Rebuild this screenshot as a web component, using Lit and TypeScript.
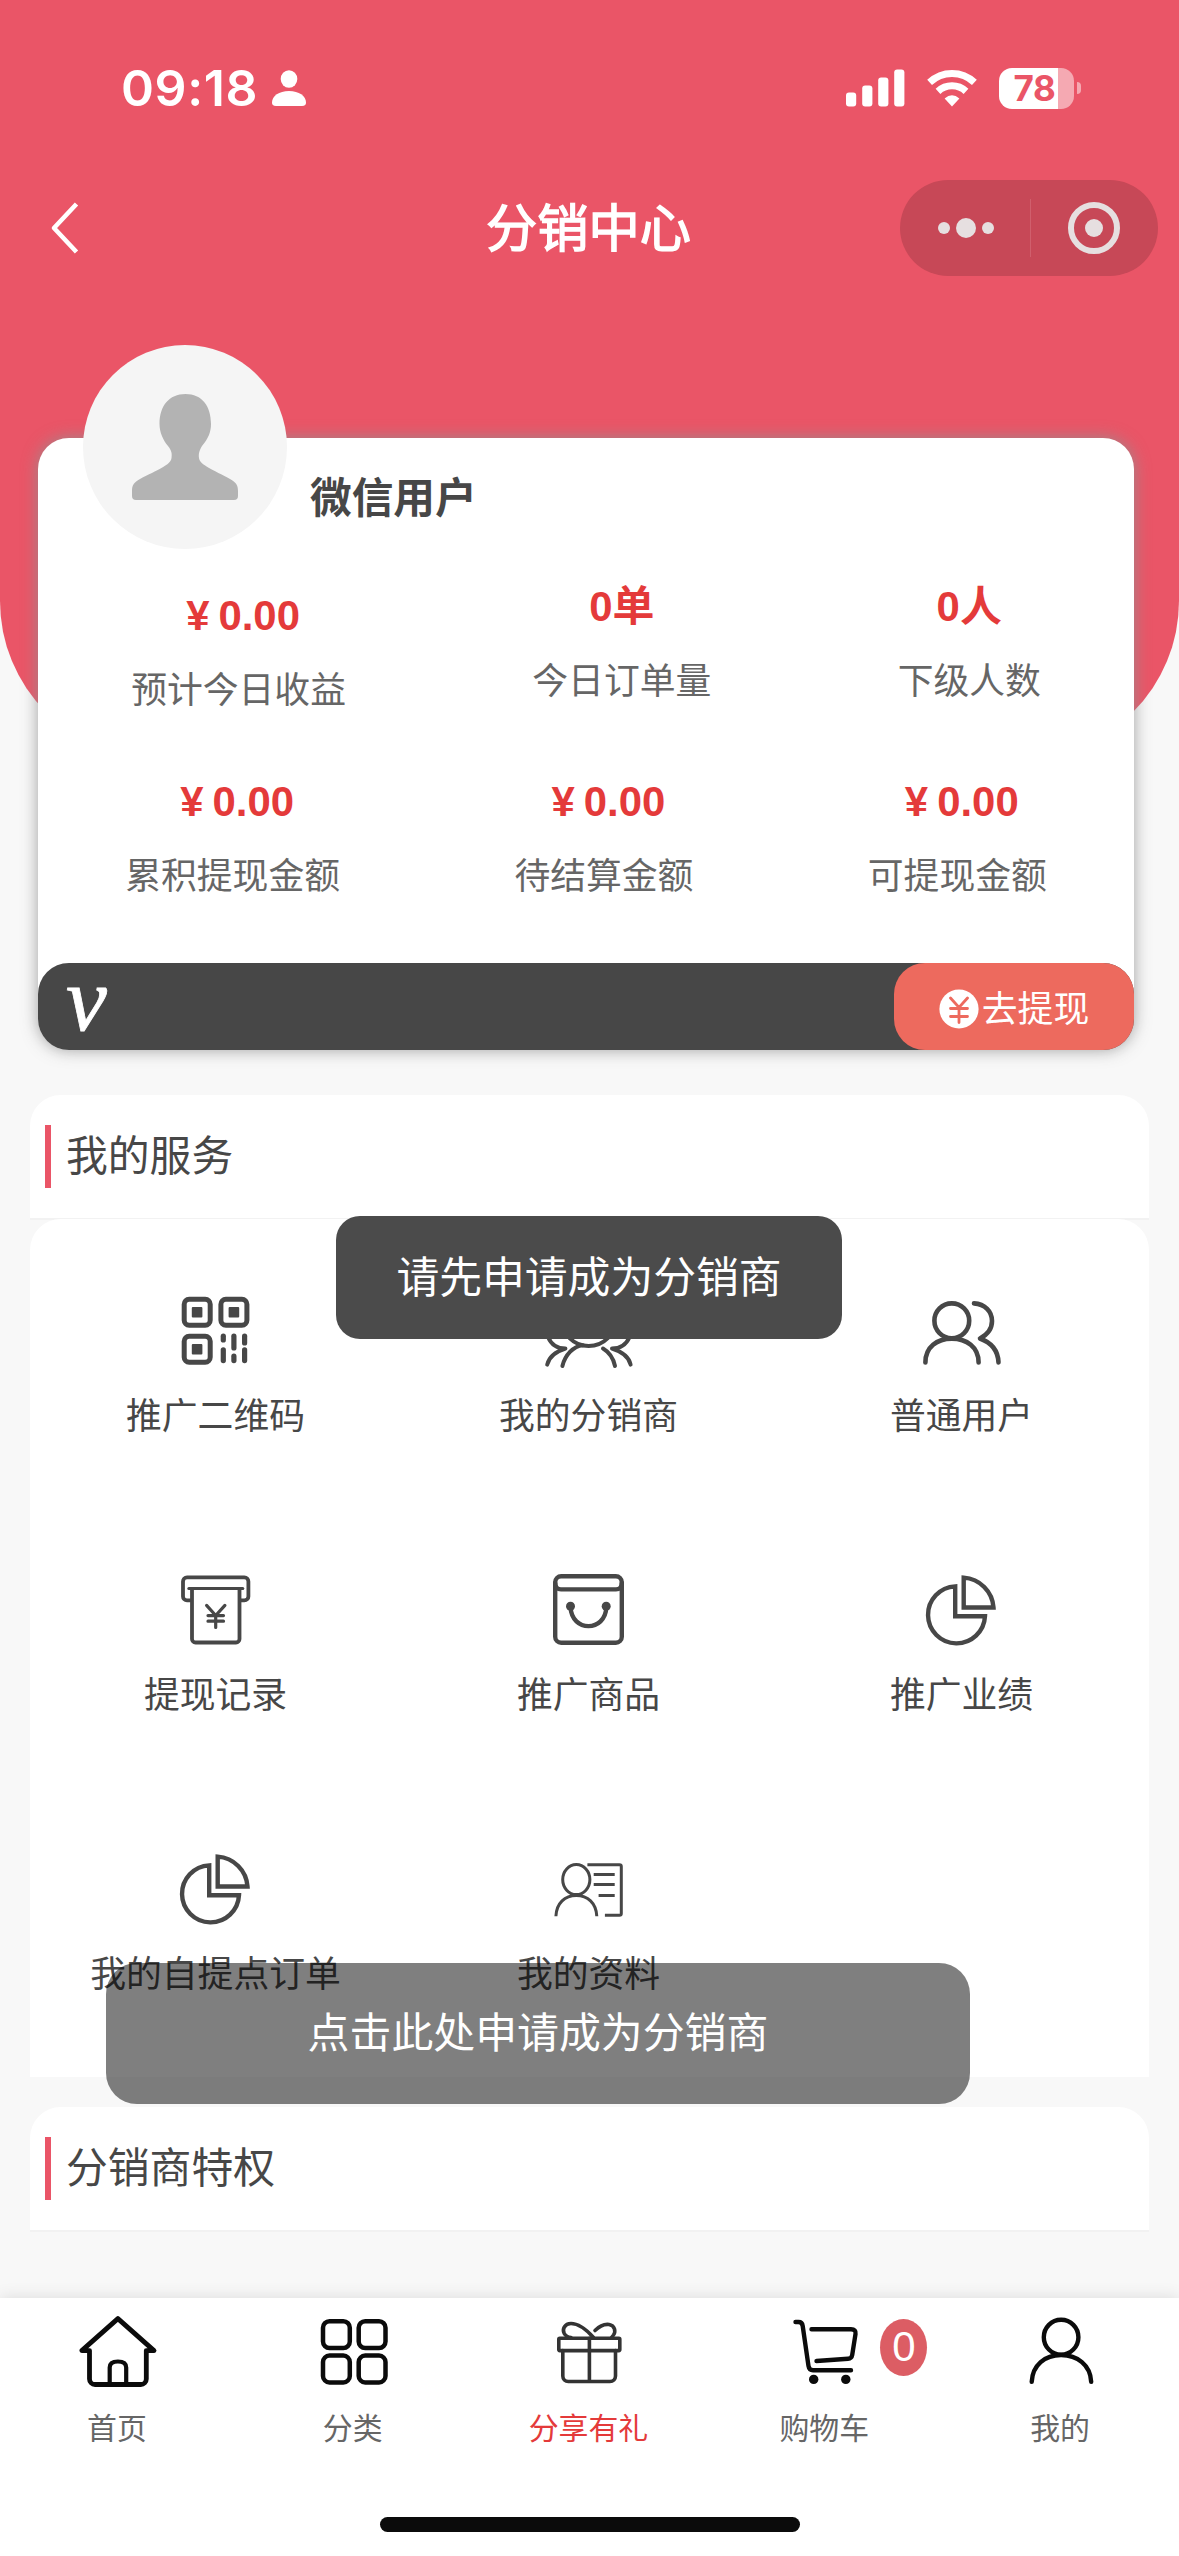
import { LitElement, html, css, svg } from "lit";
import { customElement } from "lit/decorators.js";

interface Stat { value: string; label: string; money?: boolean; }
interface Entry { icon: string; label: string; active?: boolean; }

const PIE = svg`
  <g stroke-width="4.4">
    <path stroke-linejoin="miter" d="M41.7 7.6A32 32 0 0 1 71.5 37.5H41.7Z"/>
    <path stroke-linejoin="miter" d="M33.2 16.4V46.2H63A28.5 28.5 0 1 1 33.2 16.4Z"/>
  </g>`;

const ICONS: Record<string, unknown> = {
  qr: svg`
    <g stroke-width="5">
      <rect x="8.2" y="8.2" width="26" height="26" rx="5"/>
      <rect x="44.9" y="8.2" width="26" height="26" rx="5"/>
      <rect x="8.2" y="45.2" width="26" height="26" rx="5"/>
    </g>
    <g fill="currentColor" stroke="none">
      <rect x="15.8" y="16" width="10.6" height="10.4" rx="1"/>
      <rect x="52.6" y="16" width="10.6" height="10.4" rx="1"/>
      <rect x="15.8" y="53" width="10.6" height="10.4" rx="1"/>
      <rect x="44.7" y="42.6" width="5.2" height="9" rx="2.6"/>
      <rect x="44.7" y="56.2" width="5.2" height="16" rx="2.6"/>
      <rect x="55.3" y="42.6" width="5.2" height="17" rx="2.6"/>
      <rect x="55.3" y="62.6" width="5.2" height="9.6" rx="2.6"/>
      <rect x="66" y="42.6" width="5.2" height="12" rx="2.6"/>
      <rect x="66" y="56.2" width="5.2" height="16" rx="2.6"/>
    </g>`,
  team: svg`
    <g stroke-width="4">
      <circle cx="39.7" cy="28" r="27"/>
      <path d="M13.4 75C16 64.5 24 55 34 54.2M54 57.5C60 61 64.5 68 66 75"/>
      <path d="M-1 46C2 53 8 57.6 16.4 57.6C7 60.5 0 66 -1.8 73.6"/>
      <path d="M80.6 46C77.500 53 71.500 57.6 63 57.6C72.500 60.5 80 66 81.600 73.6"/>
    </g>`,
  users: svg`
    <g stroke-width="4.6">
      <circle cx="29.8" cy="29.8" r="17.4"/>
      <path d="M3.4 71.4C3.4 56 15 47.6 29.8 47.6S56.6 56 56.6 71.4"/>
      <path d="M52 12.4C63 13 70 20.5 70 30C70 38 65.5 43.5 58 47.5C69 51.5 76 59 76.5 71.4"/>
    </g>`,
  atm: svg`
    <g stroke-width="3.8">
      <path d="M15 30.4H11A4 4 0 0 1 7 26.4V11.4A4 4 0 0 1 11 7.4H68.4A4 4 0 0 1 72.4 11.4V26.4A4 4 0 0 1 68.4 30.4H64.4"/>
      <path d="M16 19V69A3.5 3.5 0 0 0 19.500 72.500H60A3.500 3.500 0 0 0 63.500 69V19"/>
      <path d="M12.8 18.4H66.800" stroke-width="3"/>
    </g>
    <path stroke-width="3.2" d="M30.600 35.400L39.700 45.500L48.900 35.400M39.700 45.500V57.500M32 45.600H47.500M32 51.200H47.500"/>`,
  bag: svg`
    <g stroke-width="4.4">
      <rect x="6.2" y="6.2" width="66.600" height="66.600" rx="6"/>
      <path d="M6.200 13C6.200 17 8.500 19.400 12 19.400H67C70.500 19.400 72.800 17 72.800 13"/>
      <path d="M21.600 37C22.500 62.500 56.500 62.500 57.300 37"/>
    </g>
    <g fill="currentColor" stroke="none">
      <circle cx="21.500" cy="36.200" r="4.500"/><circle cx="57.200" cy="36.200" r="4.500"/>
    </g>`,
  pie: PIE,
  profile: svg`
    <g stroke-width="3" stroke-linecap="butt">
      <ellipse cx="27.300" cy="30.600" rx="13.600" ry="15"/>
      <path d="M6.900 67.200C7.500 54 16 46.400 27.300 46.400S47.200 54 47.800 67.200"/>
      <path d="M38.400 15.800H70.500Q72.300 15.800 72.300 17.600V64.500Q72.300 66.300 70.500 66.300H55.900"/>
      <path d="M44.700 25.400H65.700M44.700 35.600H65.700M49.600 46.400H65.700"/>
    </g>`,
  home: svg`
    <g stroke-width="4.800">
      <path d="M11.500 68V39.600H3.800L39.900 7.600L76 39.600H68.300V68A5.500 5.500 0 0 1 62.800 73.500H17A5.500 5.500 0 0 1 11.500 68Z"/>
      <path d="M31.700 73V56.500C31.700 52.500 34 50.500 39.900 50.500S48.200 52.500 48.200 56.500V73" stroke-width="4.200"/>
    </g>`,
  category: svg`
    <g stroke-width="4.500">
      <rect x="9" y="10.300" width="26.800" height="26.800" rx="6.500"/>
      <rect x="44.700" y="10.300" width="26.800" height="26.800" rx="6.500"/>
      <rect x="9" y="44.600" width="26.800" height="26.800" rx="6.500"/>
      <rect x="44.700" y="44.600" width="26.800" height="26.800" rx="6.500"/>
    </g>`,
  gift: svg`
    <g stroke-width="3.600" stroke="#333">
      <rect x="9.800" y="27.200" width="61" height="12.400" rx="1"/>
      <path d="M13.800 39.600V65A5.500 5.500 0 0 0 19.300 70.500H61A5.500 5.500 0 0 0 66.500 65V39.600M40.400 27.200V70.500"/>
      <path d="M44.500 26.500C36 17 27.500 12.500 22 12.500C15.500 12.500 13 18.500 15.200 22.500C16.500 25 18.500 26 22 26.500"/>
      <path d="M46 19.500C50.500 15 56 13 60 13.500C66 14.500 67 20.500 64.500 24L62.500 26.500"/>
    </g>`,
  cart: svg`
    <g stroke-width="4.400">
      <path d="M10.500 11H13.500Q17.200 11 17.700 15L23.500 55Q24.200 59.300 28 59.300H66"/>
      <path d="M26.500 18.200H66Q71.300 18.200 70.500 23L67.200 44Q66.600 47.600 63 47.800L31.500 50"/>
    </g>
    <g fill="currentColor" stroke="none">
      <circle cx="28.700" cy="68.400" r="4.700"/><circle cx="60.800" cy="68.400" r="4.700"/>
    </g>`,
  me: svg`
    <g stroke-width="4.400">
      <ellipse cx="40.100" cy="26.200" rx="17.300" ry="17.400"/>
      <path d="M10.700 70.800C11.500 54 24 44 40.100 44S69.500 54 70.200 70.800"/>
    </g>`,
};

@customElement("line-icon")
class LineIcon extends LitElement {
  static properties = { name: { type: String } };
  declare name: string;
  static styles = css`
    :host { display: block; width: 80px; height: 80px; }
    svg { display: block; overflow: visible; fill: none; stroke: currentColor; stroke-linecap: round; stroke-linejoin: round; }
  `;
  render() {
    return html`<svg width="80" height="80" viewBox="0 0 80 80">${ICONS[this.name]}</svg>`;
  }
}

@customElement("section-title")
class SectionTitle extends LitElement {
  static styles = css`
    :host {
      display: flex; align-items: center; box-sizing: border-box; height: 125px;
      padding: 0 0 0 15px; gap: 15px; background: #fff;
      border-bottom: 2px solid #f2f2f2; border-radius: 31px 31px 0 0;
      font-size: 41.800px; line-height: 60px; color: #474747;
    }
    .mark { width: 6px; height: 63px; background: #ea5567; }
  `;
  render() {
    return html`<div class="mark"></div><div class="text"><slot></slot></div>`;
  }
}

@customElement("app-root")
class AppRoot extends LitElement {
  private today: Stat[] = [
    { value: "0.00", label: "预计今日收益", money: true },
    { value: "0单", label: "今日订单量" },
    { value: "0人", label: "下级人数" },
  ];
  private totals: Stat[] = [
    { value: "0.00", label: "累积提现金额", money: true },
    { value: "0.00", label: "待结算金额", money: true },
    { value: "0.00", label: "可提现金额", money: true },
  ];
  private services: Entry[] = [
    { icon: "qr", label: "推广二维码" },
    { icon: "team", label: "我的分销商" },
    { icon: "users", label: "普通用户" },
    { icon: "atm", label: "提现记录" },
    { icon: "bag", label: "推广商品" },
    { icon: "pie", label: "推广业绩" },
    { icon: "pie", label: "我的自提点订单" },
    { icon: "profile", label: "我的资料" },
  ];
  private tabs: Entry[] = [
    { icon: "home", label: "首页" },
    { icon: "category", label: "分类" },
    { icon: "gift", label: "分享有礼", active: true },
    { icon: "cart", label: "购物车" },
    { icon: "me", label: "我的" },
  ];

  static styles = css`
    :host {
      display: flex; flex-direction: column; position: relative;
      width: 1179px; height: 2556px; overflow: hidden; background: #f8f8f8;
      font-family: "Liberation Sans", "Noto Sans CJK SC", sans-serif; color: #474747;
    }
    .header {
      flex: none; box-sizing: border-box; height: 758px; background: #ea5567; color: #fff;
      border-radius: 0 0 157px 157px;
    }
    .status { display: flex; align-items: center; height: 176px; padding: 0 98px 0 121px; }
    .time { font: 600 50px/60px Inter, sans-serif; letter-spacing: 0.600px; }
    .person { margin-left: 14px; }
    .radios { margin-left: auto; display: flex; align-items: center; }
    .wifi { margin-left: 22px; }
    .battery {
      display: flex; align-items: center; justify-content: center; box-sizing: border-box;
      width: 75px; height: 41px; margin-left: 22px; padding-right: 4px; border-radius: 13px;
      background: linear-gradient(90deg, #fff 59px, #f5a9b2 59px);
      font: 700 35px/41px Inter, sans-serif; letter-spacing: -0.300px; color: #ea5567;
    }
    .nub { width: 4px; height: 12px; margin-left: 3px; border-radius: 0 6px 6px 0; background: #f5a9b2; }
    .nav {
      display: grid; grid-template-columns: 1fr auto 1fr; align-items: center;
      height: 104px; padding: 0 21px 0 49px;
    }
    .nav h1 {
      margin: 4px 0 0; font-size: 51.200px; line-height: 80px; font-weight: 400;
      -webkit-text-stroke: 1.500px #fff; transform: translateX(-15px);
    }
    .capsule {
      justify-self: end; display: flex; align-items: center; width: 258px; height: 96px;
      border-radius: 48px; background: #c74857;
    }
    .dots { display: flex; align-items: center; justify-content: center; gap: 6px; flex: 1; padding-left: 2px; }
    .dot { width: 12px; height: 12px; border-radius: 50%; background: #e6dfe0; }
    .dot.big { width: 20px; height: 20px; }
    .rule { width: 1px; height: 58px; background: #d05f6d; }
    .target { display: flex; flex: 1; justify-content: center; }
    .ring {
      display: flex; align-items: center; justify-content: center; box-sizing: border-box;
      width: 52px; height: 52px; border: 6px solid #e6dfe0; border-radius: 50%;
    }
    .core { width: 18px; height: 18px; border-radius: 50%; background: #e6dfe0; }

    .card {
      flex: none; position: relative; display: flex; flex-direction: column; box-sizing: border-box;
      width: 1096px; height: 612px; margin: -320px 0 0 38px; background: #fff;
      border-radius: 31px; box-shadow: 0 0 16px rgba(145, 145, 145, 0.850);
    }
    .user { display: flex; height: 111px; padding-left: 45px; gap: 23px; }
    .avatar {
      display: flex; align-items: center; justify-content: center; box-sizing: border-box; flex: none;
      width: 204px; height: 204px; margin-top: -93px; border-radius: 50%; background: #f5f5f5;
    }
    .name { font-size: 41.700px; line-height: 60px; font-weight: 700; margin-top: 31px; }
    .stats { display: flex; justify-content: space-around; height: 195px; }
    .stat { display: flex; flex-direction: column; align-items: center; padding-top: 26px; }
    .stats.today .stat:first-child { padding-top: 35px; }
    .value { font-size: 41.900px; line-height: 64px; font-weight: 700; color: #e43a3a; }
    .yen { margin: 0 9px; }
    .label { font-size: 35.800px; line-height: 50px; margin-top: 18px; color: #666; }
    .bar {
      display: flex; justify-content: space-between; height: 87px; margin-top: auto;
      background: #474747; border-radius: 31px; color: #fff;
    }
    .level { font: italic 400 92px/60px "Liberation Serif", serif; -webkit-text-stroke: 0.800px #fff; margin: 6px 0 0 28px; }
    .withdraw {
      display: flex; align-items: center; justify-content: center; gap: 3px; width: 240px;
      background: #ed6a5e; border-radius: 31px; font-size: 35.800px; line-height: 50px;
    }
    .withdraw svg { margin-top: 5px; }
    .withdraw span { margin-top: 6px; }

    .block { flex: none; display: flex; flex-direction: column; margin: 0 30px; }
    .services { margin-top: 45px; }
    .grid {
      display: grid; grid-template-columns: repeat(3, 1fr); grid-auto-rows: 279px;
      box-sizing: border-box; height: 858px; margin-top: -1px; padding-top: 21px; background: #fff;
      border-radius: 31px 31px 0 0;
    }
    .entry {
      display: flex; flex-direction: column; align-items: center; padding-top: 51px; gap: 21px;
      transform: translateX(-1px);
    }
    .entry span { font-size: 35.800px; line-height: 50px; white-space: nowrap; }
    .privileges { margin-top: 30px; }

    .toast {
      position: absolute; left: 336px; top: 1216px; display: flex; align-items: center; justify-content: center;
      width: 506px; height: 123px; border-radius: 24px; background: #4b4b4b; color: #fff;
      font-size: 42.800px; line-height: 60px;
    }
    .apply {
      position: absolute; left: 106px; top: 1963px; display: flex; align-items: center; justify-content: center;
      width: 864px; height: 141px; border-radius: 31px; background: rgba(0, 0, 0, 0.500); color: #fff;
      font-size: 41.900px; line-height: 60px;
    }

    .tabbar {
      display: flex; flex-direction: column; align-items: center; box-sizing: border-box;
      height: 258px; margin-top: auto; padding-top: 13px; background: #fff;
      box-shadow: 0 0 16px rgba(0, 0, 0, 0.120);
    }
    .tabs { display: flex; width: 100%; }
    .tab { position: relative; flex: 1; display: flex; flex-direction: column; align-items: center; gap: 17px; color: #0b0b0b; }
    .tab span { font-size: 29.900px; line-height: 42px; color: #666; transform: translateX(-1px); }
    .tab.active span { color: #e43a3a; }
    .badge {
      position: absolute; left: 173px; top: 8px; width: 47px; height: 57px; border-radius: 50%;
      background: #dc5d64; color: #fff; text-align: center; font-size: 42px; line-height: 56px;
    }
    .indicator { width: 420px; height: 15px; margin-top: 67px; border-radius: 8px; background: #0b0b0b; }
  `;

  private stats(rows: Stat[], kind: string) {
    return html`<div class="stats ${kind}">
      ${rows.map((s) => html`<div class="stat">
        <div class="value">${s.money ? html`<span class="yen">¥</span>` : ""}${s.value}</div>
        <div class="label">${s.label}</div>
      </div>`)}
    </div>`;
  }

  render() {
    return html`
      <header class="header">
        <div class="status">
          <div class="time">09:18</div>
          <svg class="person" width="34" height="36" viewBox="0 0 34 36" fill="#fff">
            <ellipse cx="17" cy="9" rx="8.300" ry="8.800"/>
            <path d="M4 36C1 36 0 34.500 0 32.500C0 26 7 21 17 21S34 26 34 32.500C34 34.500 33 36 30 36Z"/>
          </svg>
          <div class="radios">
            <svg width="59" height="38" viewBox="0 0 59 38" fill="#fff">
              <rect x="0" y="23.500" width="10.200" height="14" rx="3"/>
              <rect x="16.200" y="16.500" width="10.200" height="21" rx="3"/>
              <rect x="32.200" y="8.500" width="10.200" height="29" rx="3"/>
              <rect x="48.200" y="0.500" width="10.200" height="37" rx="3"/>
            </svg>
            <svg class="wifi" width="50" height="38" viewBox="0 0 50 38">
              <g fill="none" stroke="#fff" stroke-width="7">
                <path d="M2.600 13.400A32.500 32.500 0 0 1 47.400 13.400"/>
                <path d="M11 22.400A20.500 20.500 0 0 1 39 22.400"/>
              </g>
              <path fill="#fff" d="M17.600 29.500Q25 23 32.400 29.500L25 37.500Z"/>
            </svg>
            <div class="battery">78</div>
            <div class="nub"></div>
          </div>
        </div>
        <nav class="nav">
          <svg width="32" height="54" viewBox="0 0 32 54" fill="none" stroke="#fff" stroke-width="4.600" stroke-linejoin="round">
            <path d="M27.500 3L5 27L27.500 51"/>
          </svg>
          <h1>分销中心</h1>
          <div class="capsule">
            <div class="dots"><div class="dot"></div><div class="dot big"></div><div class="dot"></div></div>
            <div class="rule"></div>
            <div class="target"><div class="ring"><div class="core"></div></div></div>
          </div>
        </nav>
      </header>

      <section class="card">
        <div class="user">
          <div class="avatar">
            <svg width="106" height="106" viewBox="0 0 106 106" fill="#b3b3b3">
              <path d="M53.500 0C37 0 27.500 12 27.500 30C27.500 38 31 46 36 52C40 57 40 60 39.500 64C39 71 25 76 8 85C2 88.500 0 91 0 97V102Q0 106 4 106H102Q106 106 106 102V97C106 91 104 88.500 98 85C82 76 67.500 71 67 64C66.500 60 67 57 70 52C76 45 79 38 79 30C79 12 70 0 53.500 0Z"/>
            </svg>
          </div>
          <div class="name">微信用户</div>
        </div>
        ${this.stats(this.today, "today")}
        ${this.stats(this.totals, "totals")}
        <div class="bar">
          <div class="level">v</div>
          <div class="withdraw">
            <svg width="40" height="40" viewBox="0 0 40 40">
              <circle cx="20" cy="20" r="19.600" fill="#fff"/>
              <path d="M11.500 9L20 18.500L28.500 9M20 18.500V33.500M11.500 19.500H28.500M11.500 27.500H28.500" fill="none" stroke="#ed6a5e" stroke-width="2.800" stroke-linecap="round"/>
            </svg>
            <span>去提现</span>
          </div>
        </div>
      </section>

      <section class="block services">
        <section-title>我的服务</section-title>
        <div class="grid">
          ${this.services.map((s) => html`<div class="entry"><line-icon .name=${s.icon}></line-icon><span>${s.label}</span></div>`)}
        </div>
      </section>

      <section class="block privileges">
        <section-title>分销商特权</section-title>
      </section>

      <footer class="tabbar">
        <div class="tabs">
          ${this.tabs.map((t) => html`<div class="tab ${t.active ? "active" : ""}">
            <line-icon .name=${t.icon}></line-icon><span>${t.label}</span>
            ${t.icon === "cart" ? html`<div class="badge">0</div>` : ""}
          </div>`)}
        </div>
        <div class="indicator"></div>
      </footer>

      <div class="apply">点击此处申请成为分销商</div>
      <div class="toast">请先申请成为分销商</div>
    `;
  }
}
